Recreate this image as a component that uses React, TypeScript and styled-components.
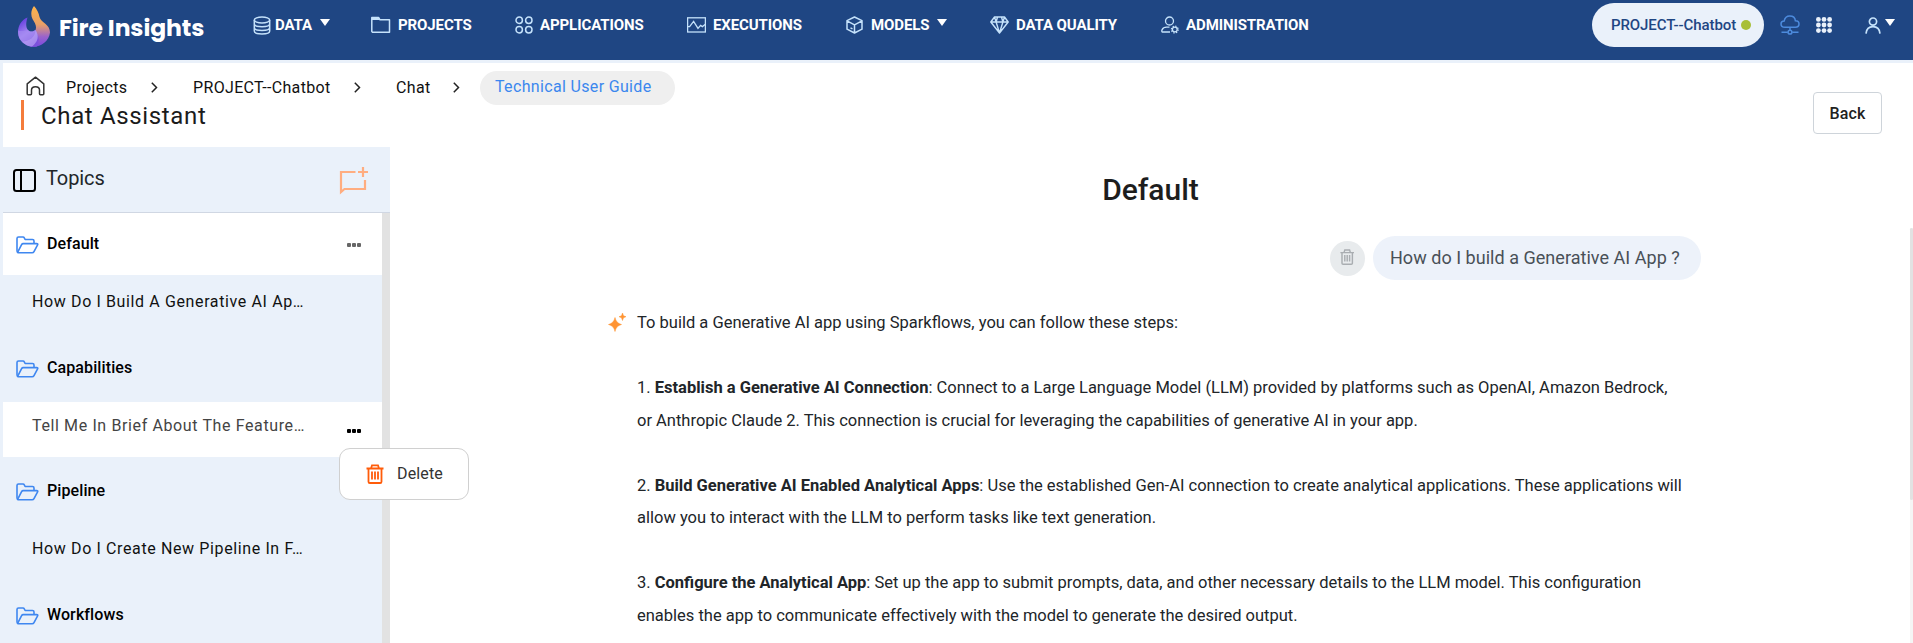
import React from 'react';
import styled, { createGlobalStyle } from 'styled-components';

const GlobalStyle = createGlobalStyle`
  * { box-sizing: border-box; }
  html, body { margin: 0; padding: 0; }
  body {
    font-family: Roboto, "Liberation Sans", sans-serif;
    font-size: 16px;
    color: #212529;
    background: #fff;
    overflow: hidden;
  }
`;

const Page = styled.div`
  height: 643px;
  display: flex;
  flex-direction: column;
  overflow: hidden;
`;

const Navbar = styled.header`
  height: 60px;
  flex: none;
  display: flex;
  align-items: flex-start;
  background: #1f4683;
  color: #fff;
`;

const Brand = styled.div`
  width: 253px;
  flex: none;
  display: flex;
  align-items: flex-start;
  padding: 6px 0 0 17px;
`;

const BrandName = styled.span`
  margin: 4px 0 0 8px;
  font: 700 23.5px/36px Poppins, "Open Sans", sans-serif;
  letter-spacing: -0.1px;
  white-space: nowrap;
`;

const Nav = styled.nav`
  flex: 1;
  display: flex;
  height: 50px;
`;

const NavItem = styled.a<{ $width: number }>`
  width: ${(p) => p.$width}px;
  flex: none;
  display: flex;
  align-items: center;
  height: 50px;
  font-size: 15px;
  font-weight: 700;
  white-space: nowrap;
  svg { flex: none; }
`;

const NavText = styled.span<{ $gap: number }>`
  margin-left: ${(p) => p.$gap}px;
  letter-spacing: -0.1px;
`;

const Caret = styled.span<{ $gap?: number }>`
  margin: 0 0 5px ${(p) => p.$gap ?? 8}px;
  border: 5px solid transparent;
  border-top: 7px solid #fff;
  border-bottom: 0;
`;

const NavTools = styled.div`
  width: 321px;
  flex: none;
  height: 50px;
  display: flex;
  align-items: center;
`;

const ProjectPill = styled.div`
  width: 172px;
  height: 44px;
  display: flex;
  align-items: center;
  padding-left: 19px;
  border-radius: 22px;
  background: #eaf1fa;
  color: #1f4683;
  font-size: 15px;
  font-weight: 500;
  letter-spacing: -0.08px;
`;

const StatusDot = styled.i`
  width: 10px;
  height: 10px;
  margin-left: 5px;
  border-radius: 50%;
  background: #a8bf38;
`;

const ToolIcon = styled.span<{ $gap: number }>`
  display: flex;
  margin-left: ${(p) => p.$gap}px;
`;

const Content = styled.div`
  flex: 1;
  min-height: 0;
  display: flex;
  flex-direction: column;
  border: solid #eaf1fa;
  border-width: 3px 0 0 3px;
`;

const PageHeader = styled.div`
  height: 84px;
  flex: none;
  display: flex;
  justify-content: space-between;
  padding-right: 31px;
`;

const Breadcrumbs = styled.div`
  display: flex;
  align-items: center;
  height: 34px;
  margin-top: 8px;
  padding-left: 23px;
  color: #111;
  letter-spacing: 0.34px;
  white-space: nowrap;
`;

const Crumb = styled.span<{ $width: number }>`
  width: ${(p) => p.$width}px;
  margin-top: -2px;
`;

const Separator = styled.span<{ $width: number }>`
  display: flex;
  width: ${(p) => p.$width}px;
  margin-top: -2px;
`;

const HomeIcon = styled.span`
  display: flex;
  width: 40px;
  margin-top: -4px;
`;

const CurrentCrumb = styled.span`
  width: 195px;
  height: 34px;
  padding-left: 15px;
  border-radius: 17px;
  background: #efefef;
  color: #3b87ee;
  line-height: 32px;
`;

const PageTitle = styled.h1`
  height: 30px;
  margin: -5px 0 0 18px;
  padding-left: 17px;
  border-left: 3px solid #f47c3c;
  font-size: 24px;
  font-weight: 400;
  line-height: 33px;
  letter-spacing: 0.65px;
  white-space: nowrap;
  color: #1b1b1b;
`;

const BackButton = styled.button`
  width: 69px;
  height: 42px;
  margin-top: 29px;
  border: 1px solid #ced4da;
  border-radius: 4px;
  background: #fff;
  color: #212121;
  font: 500 16px Roboto, sans-serif;
  letter-spacing: 0.15px;
`;

const Body = styled.div`
  flex: 1;
  min-height: 0;
  display: flex;
`;

const Sidebar = styled.aside`
  width: 387px;
  flex: none;
  display: flex;
  flex-direction: column;
  background: #eaf1fa;
`;

const TopicsHeader = styled.div`
  height: 66px;
  flex: none;
  display: flex;
  border-bottom: 1px solid #d0d7e3;
  padding: 20px 22px 0 10px;
`;

const TopicsTitle = styled.h2`
  flex: 1;
  margin: -2px 0 0 10px;
  font-size: 20px;
  font-weight: 400;
  line-height: 26px;
  letter-spacing: -0.1px;
`;

const PanelToggle = styled.span`
  display: flex;
  padding-top: 2px;
`;

const TopicList = styled.div`
  flex: 1;
  min-height: 0;
  padding-right: 8px;
  background: linear-gradient(to left, #e2e2e2 8px, transparent 8px);
  position: relative;
`;

const Folder = styled.div<{ $height: number; $active?: boolean; $top?: number }>`
  display: flex;
  height: ${(p) => p.$height}px;
  padding: ${(p) => p.$top ?? 18}px 21px 0 12px;
  background: ${(p) => (p.$active ? '#fff' : 'transparent')};
  svg { flex: none; margin-top: 5px; }
`;

const FolderName = styled.span`
  flex: 1;
  margin-left: 8px;
  font-weight: 500;
  line-height: 25px;
  letter-spacing: 0.1px;
  color: #000;
`;

const Topic = styled.div<{ $height: number; $active?: boolean }>`
  display: flex;
  height: ${(p) => p.$height}px;
  padding: ${(p) => (p.$active ? 11 : 14)}px 21px 0 29px;
  background: ${(p) => (p.$active ? '#fff' : 'transparent')};
  color: ${(p) => (p.$active ? '#444' : '#111')};
  letter-spacing: 0.62px;
  line-height: 25px;
  white-space: nowrap;
`;

const TopicText = styled.span`
  flex: 1;
`;

const More = styled.span<{ $color: string; $top: number }>`
  display: flex;
  gap: 1px;
  margin-top: ${(p) => p.$top}px;
  i {
    width: 4px;
    height: 4px;
    border-radius: 1px;
    background: ${(p) => p.$color};
  }
`;

const Menu = styled.div`
  position: absolute;
  z-index: 2;
  left: 336px;
  top: 235px;
  width: 130px;
  height: 52px;
  display: flex;
  align-items: center;
  padding-left: 26px;
  border: 1px solid #d0d0d0;
  border-radius: 11px;
  background: #fff;
  color: #333;
`;

const MenuLabel = styled.span`
  margin: 0 0 2px 13px;
  letter-spacing: 0.15px;
`;

const Chat = styled.main`
  flex: 1;
  display: flex;
  justify-content: flex-start;
  padding: 23px 0 0 218px;
`;

const Conversation = styled.div`
  width: 1093px;
  flex: none;
  display: flex;
  flex-direction: column;
`;

const ChatTitle = styled.h2`
  margin: 0;
  padding-right: 8px;
  text-align: center;
  font-size: 30px;
  font-weight: 500;
  line-height: 40px;
  color: #1d1d1d;
`;

const Question = styled.div`
  display: flex;
  align-items: center;
  justify-content: flex-end;
  gap: 8px;
  margin-top: 26px;
`;

const RoundButton = styled.span`
  width: 35px;
  height: 35px;
  display: flex;
  align-items: center;
  justify-content: center;
  padding-bottom: 3px;
  border-radius: 50%;
  background: #e8ebed;
`;

const Bubble = styled.div`
  width: 328px;
  height: 44px;
  padding-left: 17px;
  border-radius: 22px;
  background: #edf2fa;
  color: #495057;
  font-size: 18px;
  line-height: 43px;
  letter-spacing: 0.03px;
  white-space: nowrap;
`;

const Answer = styled.div`
  display: flex;
  margin-top: 27px;
`;

const Spark = styled.span`
  width: 29px;
  flex: none;
  padding-top: 5px;
`;

const AnswerText = styled.div`
  font-size: 16.5px;
  line-height: 32.5px;
  white-space: pre;
`;

const Paragraph = styled.p`
  margin: 0 0 32.5px;
`;

const ScrollTrack = styled.div`
  width: 3px;
  height: 415px;
  margin: 58px 0 0 auto;
  background: #f5f5f5;
`;

const ScrollThumb = styled.div`
  height: 272px;
  border-radius: 2px;
  background: #e2e2e2;
`;

const ice = '#c5e2fb';

const LogoMark = () => (
  <svg width="34" height="42" viewBox="0 0 34 42">
    <defs>
      <linearGradient id="flame" x1="0" y1="0" x2="0" y2="1">
        <stop offset="0" stopColor="#ffb54b" />
        <stop offset="0.45" stopColor="#e8a067" />
        <stop offset="0.75" stopColor="#9a63cc" />
        <stop offset="1" stopColor="#7a48e0" />
      </linearGradient>
      <linearGradient id="swirl" x1="0" y1="0" x2="0.5" y2="1">
        <stop offset="0" stopColor="#5227dc" />
        <stop offset="0.6" stopColor="#a78af0" />
        <stop offset="1" stopColor="#7b51dc" />
      </linearGradient>
    </defs>
    <path d="M17 0C14 4 13.500 9 15.500 13C18 17 20 20 18.500 24C17 28 13 30 11 31L13 40.500C22 42.500 32 36 33 26.500C33 18 24 17 22.500 11C21.800 7 20 3 17 0Z" fill="url(#flame)" />
    <path d="M10.500 11.500C9 16 8.500 21 11 24C13.500 26.500 16.500 25.500 18.500 24C21 29 23.500 33 20 40.500C10 42 1 35.500 1 26.500C1 20 4 14 10.500 11.500Z" fill="url(#swirl)" />
    <path d="M1 24.500C5 26 9 24 11 24C13.500 26.500 16.500 25.500 18.500 24C18 31 13 35 5 35.500C2 32 1 28 1 24.500Z" fill="#a48bf2" opacity="0.65" />
    <path d="M5 35.500C13 35 18 31 18.500 24C22.500 30 21 36 15 40.500C11 40.500 7.500 38.500 5 35.500Z" fill="#bda9f7" opacity="0.65" />
  </svg>
);

const DatabaseIcon = () => (
  <svg width="18" height="19" viewBox="0 0 18 19" fill="none" stroke={ice} strokeWidth="1.5">
    <ellipse cx="9" cy="4" rx="7.7" ry="3" />
    <path d="M1.3 4v11c0 1.7 3.4 3 7.7 3s7.7-1.3 7.7-3V4M1.3 7.7c0 1.7 3.4 3 7.7 3s7.7-1.3 7.7-3M1.3 11.4c0 1.7 3.4 3 7.7 3s7.7-1.3 7.7-3" />
  </svg>
);

const FolderIcon = () => (
  <svg width="20" height="18" viewBox="0 0 20 18" fill="none" stroke={ice} strokeWidth="1.5">
    <path d="M1.5 16.2h17V3.8H9L7.5 1.5h-6.7v14z" strokeLinejoin="round" />
    <path d="M1 1h6.8L9.3 4H1z" fill={ice} stroke="none" />
  </svg>
);

const AppsIcon = () => (
  <svg width="18" height="18" viewBox="0 0 18 18" fill="none" stroke={ice} strokeWidth="1.5">
    <circle cx="4.2" cy="4.2" r="3.2" />
    <circle cx="13.8" cy="4.2" r="3.2" />
    <circle cx="4.2" cy="13.8" r="3.2" />
    <circle cx="13.8" cy="13.8" r="3.2" />
  </svg>
);

const ExecutionsIcon = () => (
  <svg width="19" height="16" viewBox="0 0 19 16" fill="none" stroke={ice} strokeWidth="1.3">
    <rect x="0.6" y="0.8" width="17.8" height="14.2" />
    <path d="M1 9.6h1.6l4-5.2 4.400 7 2.600-3 1.800 1.200 3-2.300" />
  </svg>
);

const CubeIcon = () => (
  <svg width="17" height="18" viewBox="0 0 17 18" fill="none" stroke={ice} strokeWidth="1.5" strokeLinejoin="round">
    <path d="M8.5 1L16 4.6v8.6L8.5 17 1 13.2V4.6zM1 4.8l7.500 4 7.500-4M8.500 8.800V17M4.500 11.800l2 1" />
  </svg>
);

const DiamondIcon = () => (
  <svg width="19" height="18" viewBox="0 0 19 18" fill="none" stroke={ice} strokeWidth="1.4" strokeLinejoin="round">
    <path d="M4.500 1h10L18.200 6 9.500 17 .8 6zM.8 6h17.400M4.500 1l1.600 5 3.400 11L12.900 6l1.600-5M6.100 6L7.500 1M12.900 6L11.500 1" />
  </svg>
);

const AdminIcon = () => (
  <svg width="18" height="18" viewBox="0 0 18 18" fill="none" stroke={ice} strokeWidth="1.3">
    <circle cx="8.5" cy="5" r="4" />
    <path d="M9 16H1.200c-.9 0-.7-4.800 4.300-4.800h3" />
    <circle cx="13.8" cy="13.5" r="2.4" />
    <circle cx="13.8" cy="13.5" r="3.4" strokeDasharray="1.35 1.32" strokeWidth="1.2" />
  </svg>
);

const CloudIcon = () => (
  <svg width="20" height="20" viewBox="0 0 20 20" fill="none" stroke="#4d8bdd" strokeWidth="1.5">
    <path d="M5 12.200C2.400 12.200 1 10.600 1 8.900c0-1.900 1.500-3 3.200-3C4.800 2.800 7 1 9.800 1c3 0 5.300 2 5.600 4.800 2 0 3.600 1.300 3.600 3.200 0 1.800-1.500 3.200-3.600 3.200zM10 12.200v3.200M1.500 17.200h6.300M12.200 17.200h6.300" />
    <circle cx="10" cy="17.2" r="1.9" />
  </svg>
);

const GridIcon = () => (
  <svg width="16" height="16" viewBox="0 0 16 16" fill="#eaf1fa">
    {[2.4, 8, 13.6].map((y) => [2.4, 8, 13.6].map((x) => <circle key={`${x}-${y}`} cx={x} cy={y} r="2.4" />))}
  </svg>
);

const UserIcon = () => (
  <svg width="16" height="17" viewBox="0 0 16 17" fill="none" stroke={ice} strokeWidth="1.7">
    <circle cx="8" cy="4.6" r="3.6" />
    <path d="M1 16.600c.4-4.500 3-7 7-7s6.600 2.500 7 7" />
  </svg>
);

const House = () => (
  <svg width="19" height="20" viewBox="0 0 19 20" fill="none" stroke="#333" strokeWidth="1.5" strokeLinejoin="round">
    <path d="M1.200 7.800L9.500 1.200l8.300 6.600v10q0 .9-.9.900h-2.500q-.9 0-.9-.9v-3.700q0-3.300-4-3.300t-4 3.300v3.700q0 .9-.9.900H2.100q-.9 0-.9-.9z" />
  </svg>
);

const Chevron = () => (
  <svg width="7" height="11" viewBox="0 0 7 11" fill="none" stroke="#222" strokeWidth="1.5">
    <path d="M.8.8l4.700 4.700L.8 10.200" />
  </svg>
);

const PanelIcon = () => (
  <svg width="23" height="23" viewBox="0 0 23 23" fill="none" stroke="#000" strokeWidth="2">
    <rect x="1" y="1" width="21" height="21" rx="2.500" />
    <path d="M8 1v21" />
  </svg>
);

const NewChatIcon = () => (
  <svg width="29" height="28" viewBox="0 0 29 28" fill="none" stroke="#ffad80" strokeWidth="2.200">
    <path d="M16.500 5H2v20l3.500-3H26V13M24 0v10M19 5h10" />
  </svg>
);

const OpenFolderIcon = () => (
  <svg width="24" height="18" viewBox="0 0 24 18" fill="none" stroke="#3f87f0" strokeWidth="1.600" strokeLinejoin="round">
    <path d="M2.700 16.200Q2 15.800 2 14.500V2.500Q2 1 3.500 1h4.500q.9 0 1.300.9l.8 1.600h7.400q1.500 0 1.500 1.500v2.500" />
    <path d="M2.600 16.400L6.600 8.600q.5-1 1.600-1h13.500q1.600 0 .9 1.300l-3.600 6.700q-.6 1.100-1.900 1.100H4q-1.100 0-1.400-.3z" />
  </svg>
);

const TrashIcon = ({ color, size }: { color: string; size: number }) => (
  <svg width={size * 0.9} height={size} viewBox="0 0 18 20" fill="none" stroke={color} strokeWidth="1.800">
    <path d="M.5 4.500h17M5 4.500l1-3.200h6l1 3.200M2.500 4.500v13.200q0 1.300 1.300 1.300h10.400q1.300 0 1.300-1.300V4.500M6 7.500v8M9 7.500v8M12 7.500v8" />
  </svg>
);

const SparkIcon = () => (
  <svg width="18" height="20" viewBox="0 0 18 20" fill="#ff9433">
    <path d="M7 5.500Q8.200 11.300 13.500 12.500Q8.200 13.700 7 19.500Q5.800 13.700 .5 12.500Q5.800 11.300 7 5.500ZM14.500 1l1 2.800 2.500.9-2.500 1-1 2.800-1-2.800-2.500-1 2.500-.9z" stroke="#ff9433" strokeWidth="0.5" />
  </svg>
);

const Dots = ({ color, top }: { color: string; top: number }) => (
  <More $color={color} $top={top}><i /><i /><i /></More>
);

const navItems = [
  { label: 'DATA', Icon: DatabaseIcon, width: 118, gap: 4, caret: true },
  { label: 'PROJECTS', Icon: FolderIcon, width: 144, gap: 7 },
  { label: 'APPLICATIONS', Icon: AppsIcon, width: 172, gap: 7 },
  { label: 'EXECUTIONS', Icon: ExecutionsIcon, width: 159, gap: 7 },
  { label: 'MODELS', Icon: CubeIcon, width: 144, gap: 8, caret: true },
  { label: 'DATA QUALITY', Icon: DiamondIcon, width: 171, gap: 7 },
  { label: 'ADMINISTRATION', Icon: AdminIcon, width: 160, gap: 7 },
];

export default function App() {
  return (
    <Page>
      <GlobalStyle />
      <Navbar>
        <Brand>
          <LogoMark />
          <BrandName>Fire Insights</BrandName>
        </Brand>
        <Nav>
          {navItems.map(({ label, Icon, width, gap, caret }) => (
            <NavItem key={label} $width={width}>
              <Icon />
              <NavText $gap={gap}>{label}</NavText>
              {caret && <Caret />}
            </NavItem>
          ))}
        </Nav>
        <NavTools>
          <ProjectPill>PROJECT--Chatbot<StatusDot /></ProjectPill>
          <ToolIcon $gap={16}><CloudIcon /></ToolIcon>
          <ToolIcon $gap={16}><GridIcon /></ToolIcon>
          <ToolIcon $gap={33}><UserIcon /></ToolIcon>
          <Caret $gap={4} />
        </NavTools>
      </Navbar>
      <Content>
        <PageHeader>
          <div>
            <Breadcrumbs>
              <HomeIcon><House /></HomeIcon>
              <Crumb $width={85}>Projects</Crumb>
              <Separator $width={42}><Chevron /></Separator>
              <Crumb $width={161}>PROJECT--Chatbot</Crumb>
              <Separator $width={42}><Chevron /></Separator>
              <Crumb $width={57}>Chat</Crumb>
              <Separator $width={27}><Chevron /></Separator>
              <CurrentCrumb>Technical User Guide</CurrentCrumb>
            </Breadcrumbs>
            <PageTitle>Chat Assistant</PageTitle>
          </div>
          <BackButton>Back</BackButton>
        </PageHeader>
        <Body>
          <Sidebar>
            <TopicsHeader>
              <PanelToggle><PanelIcon /></PanelToggle>
              <TopicsTitle>Topics</TopicsTitle>
              <NewChatIcon />
            </TopicsHeader>
            <TopicList>
              <Folder $height={62} $active>
                <OpenFolderIcon />
                <FolderName>Default</FolderName>
                <Dots color="#666" top={12} />
              </Folder>
              <Topic $height={62}><TopicText>How Do I Build A Generative AI Ap…</TopicText></Topic>
              <Folder $height={65}>
                <OpenFolderIcon />
                <FolderName>Capabilities</FolderName>
              </Folder>
              <Topic $height={55} $active>
                <TopicText>Tell Me In Brief About The Feature…</TopicText>
                <Dots color="#000" top={16} />
              </Topic>
              <Folder $height={65} $top={21}>
                <OpenFolderIcon />
                <FolderName>Pipeline</FolderName>
              </Folder>
              <Topic $height={62}><TopicText>How Do I Create New Pipeline In F…</TopicText></Topic>
              <Folder $height={62}>
                <OpenFolderIcon />
                <FolderName>Workflows</FolderName>
              </Folder>
              <Menu>
                <TrashIcon color="#ff5c0a" size={20} />
                <MenuLabel>Delete</MenuLabel>
              </Menu>
            </TopicList>
          </Sidebar>
          <Chat>
            <Conversation>
              <ChatTitle>Default</ChatTitle>
              <Question>
                <RoundButton><TrashIcon color="#a9adb1" size={16} /></RoundButton>
                <Bubble>How do I build a Generative AI App ?</Bubble>
              </Question>
              <Answer>
                <Spark><SparkIcon /></Spark>
                <AnswerText>
                  <Paragraph>To build a Generative AI app using Sparkflows, you can follow these steps:</Paragraph>
                  <Paragraph>
                    1. <b>Establish a Generative AI Connection</b>: Connect to a Large Language Model (LLM) provided by platforms such as OpenAI, Amazon Bedrock,<br />
                    or Anthropic Claude 2. This connection is crucial for leveraging the capabilities of generative AI in your app.
                  </Paragraph>
                  <Paragraph>
                    2. <b>Build Generative AI Enabled Analytical Apps</b>: Use the established Gen-AI connection to create analytical applications. These applications will<br />
                    allow you to interact with the LLM to perform tasks like text generation.
                  </Paragraph>
                  <Paragraph>
                    3. <b>Configure the Analytical App</b>: Set up the app to submit prompts, data, and other necessary details to the LLM model. This configuration<br />
                    enables the app to communicate effectively with the model to generate the desired output.
                  </Paragraph>
                </AnswerText>
              </Answer>
            </Conversation>
            <ScrollTrack><ScrollThumb /></ScrollTrack>
          </Chat>
        </Body>
      </Content>
    </Page>
  );
}
